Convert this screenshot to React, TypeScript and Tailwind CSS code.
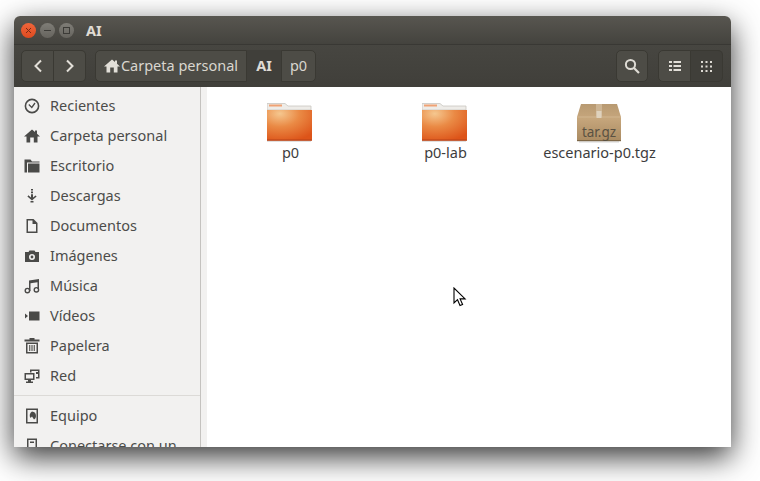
const font = { fontFamily: '"Noto Sans", sans-serif' };

function Ico({ children }: { children: React.ReactNode }) {
  return (
    <svg width="16" height="16" viewBox="0 0 16 16" className="shrink-0" fill="#4a4a48">
      {children}
    </svg>
  );
}

const HomePath = "M8 1.500 0 8.500h2.500V14.500h3.700V9.500h3.600v5h3.700V8.500H16L13 5.800V2.500h-2v1.600z";

const sidebarItems: [string, React.ReactNode][] = [
  ["Recientes", <><circle cx="8" cy="8" r="6.600" fill="none" stroke="#4a4a48" strokeWidth="1.600" /><path d="M4.800 6.600 7.800 9.400 11 5" fill="none" stroke="#4a4a48" strokeWidth="1.300" /></>],
  ["Carpeta personal", <path d={HomePath} />],
  ["Escritorio", <path d="M0.500 1.500h6l1.500 2h7.500v1H3v10H0.500zM4 5.500h11.500v9H4z" />],
  ["Descargas", <path d="M7 1h2v1.600H7zM7 3.600h2v1.600H7zM7 6.200h2v3.200l2.600-2 1 1.200L8 12.400 3.400 8.400l1-1.200L7 9.400zM6.500 13h3v1.500h-3z" />],
  ["Documentos", <path d="M2.500 1h7l4 4v10h-11zM4 2.500v11h8V6H8.500V2.500z" fillRule="evenodd" />],
  ["Imágenes", <path d="M5.500 2.500h5l1 1.500h3.500v10H1V4h3.500zM8 6a3 3 0 1 0 0 6 3 3 0 0 0 0-6zM8 7.600a1.400 1.400 0 1 1 0 2.800 1.400 1.400 0 0 1 0-2.800z" fillRule="evenodd" />],
  ["Música", <><path d="M5 2.500 15 1v10h-1.500V4.200L6.500 5.300V13H5z" /><circle cx="3.400" cy="12.600" r="2.200" fill="none" stroke="#4a4a48" strokeWidth="1.400" /><circle cx="12.400" cy="11.800" r="2.200" fill="none" stroke="#4a4a48" strokeWidth="1.400" /></>],
  ["Vídeos", <path d="M5 3.500h10.500v9H5zM1 5.500l3 2.500-3 2.500z" />],
  ["Papelera", <path d="M5.500 0h5v1.500h5v2H.5v-2h5zM2 4.500h12V15.500H2zM3.500 6v8h9V6zM5.200 7h1.100v6H5.200zM7.450 7h1.100v6H7.450zM9.700 7h1.100v6H9.700z" fillRule="evenodd" />],
  ["Red", <path d="M6 1.500h9.500v9H12V9h2V3H7.500v1.500H6zM.5 5h10v7H7v1.500h2V15H2v-1.500h2V12H.5zM2 6.500v4h7v-4zM12 4h2v2h-2z" fillRule="evenodd" />],
];

function SidebarRow({ label, icon }: { label: string; icon: React.ReactNode }) {
  return (
    <div className="flex h-[30px] shrink-0 items-center gap-[10px] pl-[10px] text-[14.5px] text-[#4c4c4a]">
      <Ico>{icon}</Ico>
      <span className="whitespace-nowrap">{label}</span>
    </div>
  );
}

function Folder({ id }: { id: string }) {
  return (
    <svg width="48" height="42" viewBox="2 1 48 42">
      <defs>
        <radialGradient id={id} cx="0.3" cy="0.12" r="0.95">
          <stop offset="0" stopColor="#f5c78f" />
          <stop offset="0.45" stopColor="#ea8a45" />
          <stop offset="1" stopColor="#dd5419" />
        </radialGradient>
      </defs>
      <path d="M2 9V2.500h18l3 2.500h23v4z" fill="#eeece8" stroke="#c9c6c0" strokeWidth="0.8" />
      <rect x="4" y="3.500" width="13" height="2" fill="#f0a274" />
      <path d="M1 9h46v29.500a1 1 0 0 1-1 1H2a1 1 0 0 1-1-1z" fill={`url(#${id})`} />
      <rect x="1" y="38.500" width="46" height="1.200" fill="#b5431a" />
      <rect x="2" y="40" width="44" height="1" fill="#000" opacity="0.12" />
    </svg>
  );
}

function Package() {
  return (
    <svg width="48" height="42" viewBox="2 0 48 42" style={{ fontFamily: '"Noto Sans", sans-serif' }}>
      <defs>
        <linearGradient id="box" x1="0" y1="0" x2="0" y2="1">
          <stop offset="0" stopColor="#b89a72" />
          <stop offset="0.4" stopColor="#c6a67c" />
          <stop offset="1" stopColor="#ab8c63" />
        </linearGradient>
      </defs>
      <path d="M6 2h36l4 13v23H2V15z" fill="url(#box)" />
      <path d="M2 15h44" stroke="#d5bb97" strokeWidth="0.8" />
      <path d="M21 2h6v13h-6z" fill="#cdb594" />
      <path d="M21.500 9h5v7h-5z" fill="#dfd2bd" />
      <rect x="2" y="38" width="44" height="1.200" fill="#7d6747" />
      <rect x="4" y="39.200" width="40" height="1.500" fill="#000" opacity="0.12" />
      <text x="24" y="35" textAnchor="middle" fontSize="13.5" fill="#5a5142">tar.gz</text>
    </svg>
  );
}

function FileItem({ label, icon, labelClass }: { label: string; icon: React.ReactNode; labelClass?: string }) {
  return (
    <div className="flex w-[155px] flex-col items-center">
      <div className="flex h-[42px] items-center justify-center">{icon}</div>
      <div className={`-mt-[2px] whitespace-nowrap text-[14.5px] leading-5 text-[#3d3d3d] ${labelClass ?? ""}`}>{label}</div>
    </div>
  );
}

const btn = "flex items-center justify-center border border-[#3a3933] bg-[#4d4c46]";

export default function App() {
  return (
    <div className="h-[481px] w-[760px] overflow-hidden bg-white pl-[14px] pt-[16px]" style={font}>
      <div className="h-[431px] w-[717px] rounded-t-[6px] shadow-[0_10px_30px_rgba(0,0,0,0.8)]">
        <div className="relative flex h-full w-full flex-col overflow-hidden rounded-t-[6px]">
          <div className="flex h-[29px] shrink-0 items-center border-b border-[#393834] bg-gradient-to-b from-[#585650] to-[#44433e] pl-[7px]">
            <div className="flex h-[15px] w-[15px] items-center justify-center rounded-full bg-gradient-to-b from-[#f0653a] to-[#dd4a1f]">
              <svg width="7" height="7" viewBox="0 0 7 7"><path d="M1 1l5 5M6 1 1 6" stroke="#7a2a12" strokeWidth="1" /></svg>
            </div>
            <div className="ml-[4px] flex h-[15px] w-[15px] items-center justify-center rounded-full bg-gradient-to-b from-[#7f7d77] to-[#66645e]">
              <div className="h-px w-[7px] bg-[#3c3b37]" />
            </div>
            <div className="ml-[4px] flex h-[15px] w-[15px] items-center justify-center rounded-full bg-gradient-to-b from-[#7f7d77] to-[#66645e]">
              <div className="h-[7px] w-[7px] border border-[#3c3b37]" />
            </div>
            <div className="ml-[12px] mt-[1px] text-[14.5px] font-bold text-[#e0dcd4]">AI</div>
          </div>

          <div className="flex h-[42px] shrink-0 items-center bg-gradient-to-b from-[#474641] to-[#403f3a] pl-[7px] pr-[8px] text-[#d9d6cf]">
            <div className="flex h-[32px]">
              <div className={`${btn} w-[33px] rounded-l-[5px]`}>
                <svg width="10" height="14" viewBox="0 0 10 14"><path d="M8 1.500 2.500 7 8 12.500" fill="none" stroke="#e2dfd8" strokeWidth="2" /></svg>
              </div>
              <div className={`${btn} w-[32px] rounded-r-[5px] border-l-0`}>
                <svg width="10" height="14" viewBox="0 0 10 14"><path d="M2 1.500 7.500 7 2 12.500" fill="none" stroke="#e2dfd8" strokeWidth="2" /></svg>
              </div>
            </div>
            <div className="ml-[9px] flex h-[32px] text-[14.5px]">
              <div className={`${btn} w-[152px] gap-[1px] rounded-l-[5px]`}>
                <svg width="16" height="16" viewBox="0 0 16 16" fill="#e2dfd8"><path d={HomePath} /></svg>
                <span className="whitespace-nowrap">Carpeta personal</span>
              </div>
              <div className="flex w-[34px] items-center justify-center bg-[#403f3a] font-bold text-[#dedbd4]">AI</div>
              <div className={`${btn} w-[35px] rounded-r-[5px]`}>p0</div>
            </div>
            <div className="flex-1" />
            <div className={`${btn} h-[32px] w-[32px] rounded-[5px]`}>
              <svg width="16" height="16" viewBox="0 0 16 16" fill="none" stroke="#dedbd4"><circle cx="6.500" cy="6.500" r="4.600" strokeWidth="2" /><path d="M10 10l5 5" strokeWidth="2.200" /></svg>
            </div>
            <div className="ml-[10px] flex h-[32px]">
              <div className={`${btn} w-[33px] rounded-l-[5px]`}>
                <svg width="12" height="10" viewBox="0 0 12 10" fill="#e2dfd8"><path d="M0 0h3v2H0zM4.500 0H12v2H4.500zM0 4h3v2H0zM4.500 4H12v2H4.500zM0 8h3v2H0zM4.500 8H12v2H4.500z" /></svg>
              </div>
              <div className="flex w-[32px] items-center justify-center rounded-r-[5px] border border-l-0 border-[#3a3933] bg-[#403f3a]">
                <svg width="11" height="11" viewBox="0 0 11 11" fill="#dedbd4"><path d="M0 0h2v2H0zM4.500 0h2v2h-2zM9 0h2v2H9zM0 4.500h2v2H0zM4.500 4.500h2v2h-2zM9 4.500h2v2H9zM0 9h2v2H0zM4.500 9h2v2h-2zM9 9h2v2H9z" /></svg>
              </div>
            </div>
          </div>

          <div className="flex min-h-0 flex-1">
            <div className="flex w-[187px] shrink-0 flex-col overflow-hidden border-r border-[#c4c2bf] bg-[#f2f1f0] pt-[4px]">
              {sidebarItems.map(([l, i]) => (
                <SidebarRow key={l} label={l} icon={i} />
              ))}
              <div className="mb-[5px] mt-[4px] h-px shrink-0 bg-[#dcdad7]" />
              <SidebarRow
                label="Equipo"
                icon={<path d="M2 0.500h12v15H2zM3.500 2v12h9V2zM8 3.500a4.500 4.500 0 0 1 4 4.500c0 2-1 3-2 3.500L8 8.500 6.500 10A4.500 4.500 0 0 1 8 3.500z" fillRule="evenodd" />}
              />
              <SidebarRow
                label="Conectarse con un"
                icon={<path d="M3 0.500h10v15H3zM4.500 2v12h7V2zM6 3.500h4v1.500H6z" fillRule="evenodd" />}
              />
            </div>
            <div className="w-[6px] shrink-0 bg-[#f2f1f0]" />
            <div className="flex flex-1 items-start bg-white pl-[6px] pt-[15px]">
              <FileItem label="p0" icon={<Folder id="f1" />} />
              <FileItem label="p0-lab" icon={<Folder id="f2" />} />
              <FileItem label="escenario-p0.tgz" icon={<Package />} labelClass="pr-[2px]" />
            </div>
          </div>

          <svg className="absolute left-[439px] top-[271px]" width="14" height="20" viewBox="0 0 14 20">
            <path d="M1 1v15l3.500-3.300 2.500 5.800 2.600-1.100-2.500-5.500h5z" fill="#fff" stroke="#000" strokeWidth="1.100" />
          </svg>
        </div>
      </div>
    </div>
  );
}
